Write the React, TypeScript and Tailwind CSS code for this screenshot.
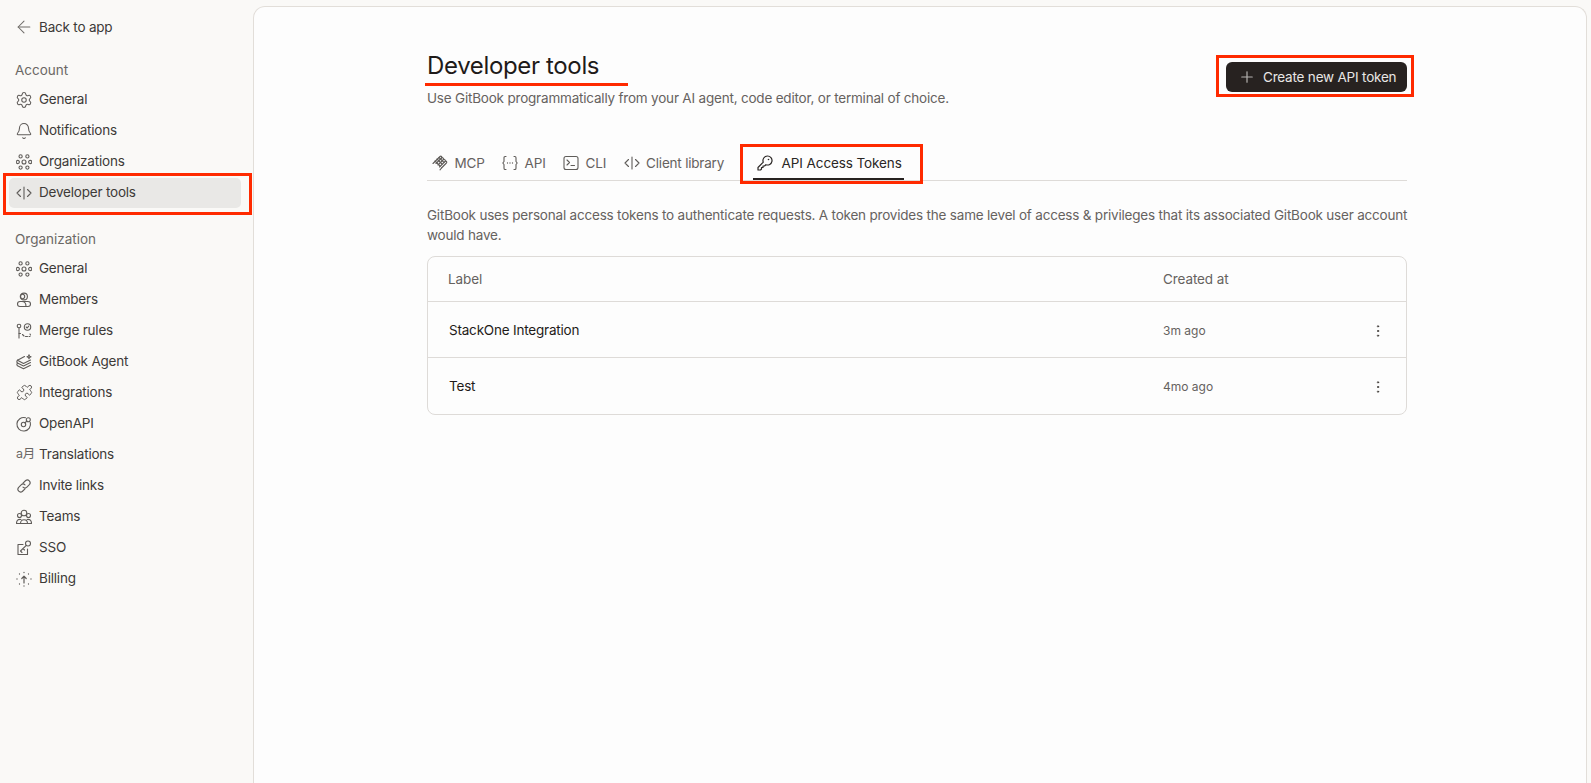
import type { ReactNode } from 'react';
import { ArrowLeft, Bell, EllipsisVertical, Plus, Puzzle, Settings } from 'lucide-react';

function Svg({ children }: { children: ReactNode }) {
  return (
    <svg
      viewBox="0 0 16 16"
      fill="none"
      stroke="currentColor"
      strokeWidth="1.1"
      strokeLinecap="round"
      strokeLinejoin="round"
      className="size-4 shrink-0"
    >
      {children}
    </svg>
  );
}

const Hexdots = () => (
  <Svg>
    <circle cx="4.6" cy="2.4" r="1.6" />
    <circle cx="11.4" cy="2.4" r="1.6" />
    <circle cx="1.8" cy="8" r="1.6" />
    <circle cx="8" cy="8" r="2" />
    <circle cx="14.2" cy="8" r="1.6" />
    <circle cx="4.6" cy="13.6" r="1.6" />
    <circle cx="11.4" cy="13.6" r="1.6" />
  </Svg>
);

const CodeIcon = () => (
  <Svg>
    <path d="M4.500 4.500 1 8l3.500 3.500M11.500 4.500 15 8l-3.500 3.500M8 2v12" />
  </Svg>
);

const Members = () => (
  <Svg>
    <circle cx="8" cy="4.500" r="3.400" />
    <circle cx="6.500" cy="4.500" r="2.200" />
    <rect x="1.500" y="9.500" width="13" height="5" rx="2.500" />
    <path d="M6 9.500c2 0 4 1.500 4 5" />
  </Svg>
);

const MergeRules = () => (
  <Svg>
    <circle cx="3" cy="3" r="1.800" />
    <path d="M3 5v10" />
    <circle cx="11.500" cy="4" r="3.200" />
    <path d="m10.200 4 1 1 1.500-1.800" />
    <path d="M3 10.500h1.500M6.500 11.500l1.500 1.500M9.500 13.500h2M13 13.500h1M14 11l.5 1" />
  </Svg>
);

const Agent = () => (
  <Svg>
    <path d="M8.500 2.500 1.500 6.200 7.500 9.500l7-3.500" />
    <path d="M1.500 6.200c-.8 1-.8 2 0 2.800l6 3 7-3.500" />
    <path d="M1.500 9c-.8 1-.8 2 0 2.800l6 3 7-3.500" />
    <path d="M13 .8l.6 1.400 1.400.6-1.400.6-.6 1.400-.6-1.400-1.400-.6 1.400-.6z" />
  </Svg>
);

const OpenApi = () => (
  <Svg>
    <path d="M9.500 1.700A6.800 6.800 0 1 0 14.300 6.500" />
    <circle cx="7.500" cy="8.500" r="2.200" />
    <path d="M9 6.800 10.800 5" />
    <circle cx="12.300" cy="3.700" r="2" />
  </Svg>
);

const LinkIcon = () => (
  <Svg>
    <path d="M7 5.200 9.700 2.500a2.800 2.800 0 0 1 3.900 3.900l-2.700 2.700a2.800 2.800 0 0 1-3.900 0" />
    <path d="M9 10.800 6.300 13.500a2.800 2.800 0 0 1-3.900-3.900l2.700-2.700a2.800 2.800 0 0 1 3.900 0" />
  </Svg>
);

const Teams = () => (
  <Svg>
    <circle cx="8" cy="4" r="2.800" />
    <circle cx="3.500" cy="6.500" r="2" />
    <circle cx="12.500" cy="6.500" r="2" />
    <path d="M4.500 14.500c0-5 7-5 7 0z" />
    <path d="M.5 14.500c0-3 1.500-4.500 4.500-4M15.500 14.500c0-3-1.500-4.500-4.500-4M.5 14.500h15" />
  </Svg>
);

const Sso = () => (
  <Svg>
    <path d="M7 4.500H2v10h9.500V9" />
    <circle cx="12" cy="3.500" r="2.500" />
    <path d="M10.300 5.300 4.500 11l1.500 1.500M7 8.500l1.500 1.500" />
  </Svg>
);

const Billing = () => (
  <Svg>
    <path d="M8 12V5.500M5.800 7.500 8 5.200l2.200 2.300" strokeWidth="1.200" />
    <path d="M8 1.500v.1M3.500 3v.1M12.500 3v.1M1 8v.1M15 8v.1M3.500 13v.1M12.500 13v.1M8 15v.1" strokeWidth="1.300" />
  </Svg>
);

const Translations = () => (
  <span className="w-4 shrink-0 whitespace-nowrap text-[12.500px] leading-none text-[#6b6865] font-['Inter','Noto_Sans_CJK_JP',sans-serif]">
    a月
  </span>
);

const McpIcon = () => (
  <Svg>
    <path d="M1 8.500 8 1.500c1-1 2.500.5 1.500 1.500L4 8.500" />
    <path d="M9.500 3c1-1 2.800.7 1.800 1.700L6 10" />
    <path d="M11.300 4.700c1-1 2.800.7 1.800 1.700L7.500 12" />
    <path d="M13.100 6.400c1-1 2.300.6 1.300 1.600L9.500 13" />
    <path d="M3 6 8 11M5 4l5 5M7 2.500l5 5M9.500 13 8 14.800" />
  </Svg>
);

const BracesDots = () => (
  <Svg>
    <path d="M4 1.500H3.200C2.300 1.500 2 2 2 2.800v3.700L.8 8 2 9.500v3.700c0 .8.300 1.300 1.200 1.300H4" />
    <path d="M12 1.500h.8c.9 0 1.200.5 1.200 1.300v3.700L15.200 8 14 9.500v3.700c0 .8-.3 1.300-1.200 1.300H12" />
    <path d="M5.500 8v.1M8 8v.1M10.500 8v.1" strokeWidth="1.300" />
  </Svg>
);

const TerminalIcon = () => (
  <Svg>
    <rect x="1" y="1.500" width="14" height="13" rx="2" />
    <path d="m4 5 2.500 2.500L4 10M8 10.500h3.500" />
  </Svg>
);

const KeyIcon = () => (
  <Svg>
    <path d="M10.500 1a4.500 4.500 0 1 1-1.600 8.700L7.500 11H6v1.500H4.500V14L3.500 15H1v-2.500l5.300-5.300A4.500 4.500 0 0 1 10.500 1z" strokeWidth="1.200" />
    <circle cx="11.500" cy="4.500" r=".8" fill="currentColor" stroke="none" />
  </Svg>
);

const accountItems = [
  { label: 'General', icon: <Settings size={18} strokeWidth={1.400} className="shrink-0" /> },
  { label: 'Notifications', icon: <Bell size={18} strokeWidth={1.400} className="shrink-0" /> },
  { label: 'Organizations', icon: <Hexdots /> },
  { label: 'Developer tools', icon: <CodeIcon />, active: true },
];

const orgItems = [
  { label: 'General', icon: <Hexdots /> },
  { label: 'Members', icon: <Members /> },
  { label: 'Merge rules', icon: <MergeRules /> },
  { label: 'GitBook Agent', icon: <Agent /> },
  { label: 'Integrations', icon: <Puzzle size={17} strokeWidth={1.400} className="shrink-0" /> },
  { label: 'OpenAPI', icon: <OpenApi /> },
  { label: 'Translations', icon: <Translations /> },
  { label: 'Invite links', icon: <LinkIcon /> },
  { label: 'Teams', icon: <Teams /> },
  { label: 'SSO', icon: <Sso /> },
  { label: 'Billing', icon: <Billing /> },
];

const tabs = [
  { label: 'MCP', icon: <McpIcon /> },
  { label: 'API', icon: <BracesDots /> },
  { label: 'CLI', icon: <TerminalIcon /> },
  { label: 'Client library', icon: <CodeIcon /> },
];

const tokens = [
  { label: 'StackOne Integration', created: '3m ago' },
  { label: 'Test', created: '4mo ago' },
];

function NavRow({ label, icon, active }: { label: string; icon: ReactNode; active?: boolean }) {
  return (
    <div
      className={`relative flex h-[30px] items-center gap-[7px] rounded-[5px] pl-[7px] text-[13.500px] tracking-[-0.2px] text-[#3d3a38] ${
        active ? 'bg-[#e9e8e6]' : ''
      }`}
    >
      <span className="flex w-4 shrink-0 justify-center text-[#5f5c59]">{icon}</span>
      <span>{label}</span>
      {active && <div className="absolute -left-[6px] -right-[11px] -top-[5px] -bottom-[7px] border-[3px] border-[#ff2a00]" />}
    </div>
  );
}

export default function App() {
  return (
    <div className="flex h-[783px] overflow-hidden bg-[#faf9f7] font-['Inter',sans-serif]">
      <aside className="w-[253px] shrink-0 pl-[9px] pr-3">
        <div className="mt-3 flex h-[30px] items-center gap-[7px] pl-[7px] text-[13.500px] tracking-[-0.2px] text-[#3d3a38]">
          <span className="flex w-4 shrink-0 justify-center text-[#6f6c69]">
            <ArrowLeft size={20} strokeWidth={1.250} className="shrink-0" />
          </span>
          Back to app
        </div>
        <p className="mt-[18px] h-5 pl-[6px] text-[13.500px] leading-5 text-[#6b6865]">Account</p>
        <nav className="mt-[4.500px] flex flex-col gap-px">
          {accountItems.map((item) => (
            <NavRow key={item.label} {...item} />
          ))}
        </nav>
        <p className="mt-[21px] h-5 pl-[6px] text-[13.500px] leading-5 text-[#6b6865]">Organization</p>
        <nav className="mt-[5px] flex flex-col gap-px">
          {orgItems.map((item) => (
            <NavRow key={item.label} {...item} />
          ))}
        </nav>
      </aside>

      <main className="mt-[6px] mr-1 flex-1 rounded-t-xl border border-b-0 border-[#e2ded9] bg-[#fdfdfd] pl-[173px]">
        <div className="w-[980px]">
          <div className="flex items-start justify-between pt-[43px]">
            <div>
              <div className="relative">
                <h1 className="text-2xl leading-[32px] font-normal tracking-[-0.35px] text-[#1f1b19]">Developer tools</h1>
                <div className="absolute -left-[2px] top-[33px] h-[2.500px] w-[203px] bg-[#ff2a00]" />
              </div>
              <p className="mt-[6px] text-[13.500px] leading-5 tracking-[-0.2px] text-[#66625f]">
                Use GitBook programmatically from your AI agent, code editor, or terminal of choice.
              </p>
            </div>
            <div className="relative mt-3">
              <button className="flex h-[30px] w-[181px] items-center gap-[7px] rounded-md bg-[#272220] pl-[12px] text-[13.500px] tracking-[-0.2px] text-[#e9e7e5]">
                <Plus size={18} strokeWidth={1.600} className="shrink-0 text-[#b5b2af]" />
                Create new API token
              </button>
              <div className="absolute -left-[10px] -right-[7px] -top-[7px] -bottom-[5px] border-[3px] border-[#ff2a00]" />
            </div>
          </div>

          <div className="mt-[34px] flex h-[39px] items-start border-b border-[#dedbd8] pl-px pt-[9px]">
            {tabs.map((tab) => (
              <div
                key={tab.label}
                className="mr-[9.500px] flex h-6 items-center gap-[6.500px] px-1 text-[13.500px] tracking-[-0.2px] text-[#66625f]"
              >
                <span className="text-[#5f5c59]">{tab.icon}</span>
                {tab.label}
              </div>
            ))}
            <div className="relative ml-[15px] flex h-[29px] w-[151px] items-start gap-[9px] pl-1 pt-[2px] text-[13.500px] leading-5 font-normal tracking-[-0.1px] whitespace-nowrap text-[#2a2624]">
              <span className="mt-[2px]">
                <KeyIcon />
              </span>
              <span>API Access Tokens</span>
              <div className="absolute bottom-0 left-0 right-0 h-[2px] bg-[#272220]" />
              <div className="absolute -left-[13px] -right-[19px] -top-[7px] -bottom-[4px] border-[3px] border-[#ff2a00]" />
            </div>
          </div>

          <p className="mt-[24px] w-[986px] text-[13.500px] leading-5 tracking-[-0.2px] text-[#66625f]">
            GitBook uses personal access tokens to authenticate requests. A token provides the same level of access &amp; privileges that its associated GitBook user account would have.
          </p>

          <div className="mt-[11px] overflow-hidden rounded-lg border border-[#dedbd8]">
            <div className="grid h-[44px] grid-cols-[715px_1fr] items-center pl-5 text-[13.500px] tracking-[-0.1px] text-[#66625f]">
              <span>Label</span>
              <span>Created at</span>
            </div>
            {tokens.map((token) => (
              <div
                key={token.label}
                className="grid h-[56px] grid-cols-[715px_1fr_auto] items-center border-t border-[#dedbd8] pl-5 pr-5 pt-[2px] last:h-[57px] last:pt-px"
              >
                <span className="pl-px text-[13.500px] tracking-[-0.2px] text-[#1f1b19]">{token.label}</span>
                <span className="text-xs text-[#66625f]">{token.created}</span>
                <EllipsisVertical size={16} strokeWidth={1.500} className="text-[#46423f]" />
              </div>
            ))}
          </div>
        </div>
      </main>
    </div>
  );
}
